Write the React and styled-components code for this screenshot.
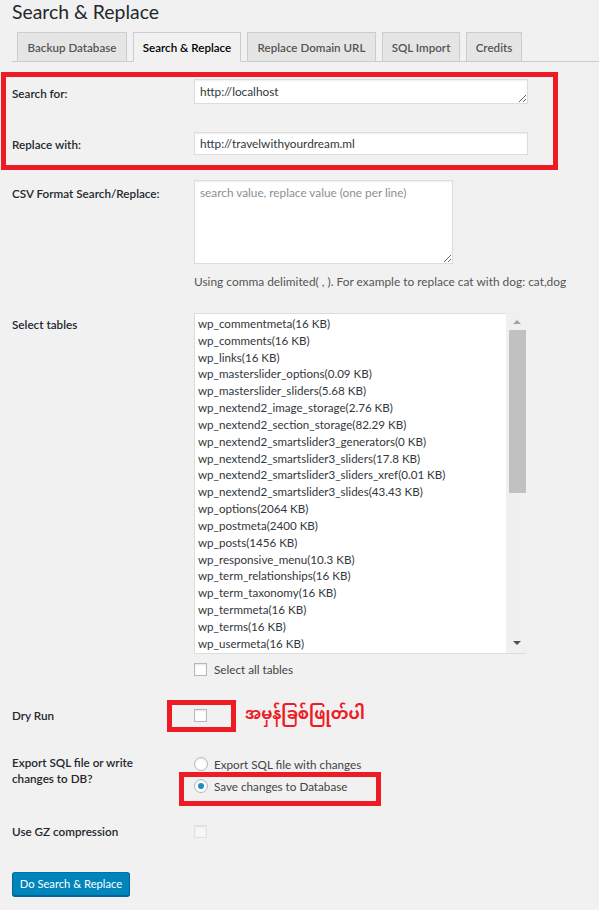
import React from "react";
import styled, { createGlobalStyle } from "styled-components";

const FONT = `"Lato", "Open Sans", "Noto Sans", sans-serif`;

const Global = createGlobalStyle`
  html, body { margin: 0; padding: 0; background: #f1f1f1; }
  body { font-family: ${FONT}; font-size: 11.7px; color: #444; }
  * { box-sizing: border-box; }
`;

const Page = styled.div`
  width: 599px;
  min-height: 910px;
  overflow: hidden;
  padding: 0 0 0 12px;
`;

const Title = styled.h1`
  margin: -1px 0 0;
  font-size: 19.4px;
  line-height: 26px;
  font-weight: 400;
  color: #23282d;
`;

const TabBar = styled.nav`
  display: flex;
  gap: 6px;
  margin-top: 7px;
  padding-left: 5px;
  border-bottom: 1px solid #ccc;
  height: 30px;
`;

const Tab = styled.a`
  display: block;
  flex: none;
  width: ${(p) => p.$w}px;
  height: 30px;
  padding: 5px 0 4px;
  text-align: center;
  line-height: 19px;
  font-size: 11.6px;
  font-weight: 600;
  color: ${(p) => (p.$active ? "#000" : "#555")};
  background: ${(p) => (p.$active ? "#f1f1f1" : "#e5e5e5")};
  border: 1px solid #ccc;
  border-bottom-color: ${(p) => (p.$active ? "#f1f1f1" : "#ccc")};
  white-space: nowrap;
  text-decoration: none;
`;

const Form = styled.form`
  display: flex;
  flex-direction: column;
`;

const Row = styled.div`
  display: grid;
  grid-template-columns: 182px auto;
  align-items: ${(p) => p.$align || "start"};
  margin-top: ${(p) => p.$mt}px;
`;

const Label = styled.div`
  padding-top: ${(p) => p.$pt || 0}px;
  line-height: ${(p) => p.$lh || 18}px;
  font-weight: 600;
  color: #23282d;
`;

const Field = styled.div`
  position: relative;
  display: flex;
  flex-direction: column;
  align-items: flex-start;
`;

const HighlightGroup = styled.div`
  position: relative;
`;

const RedFrame = styled.div`
  position: absolute;
  left: ${(p) => p.$l}px;
  top: ${(p) => p.$t}px;
  width: ${(p) => p.$w}px;
  height: ${(p) => p.$h}px;
  border: 5px solid #ed1c24;
  pointer-events: none;
`;

const Note = styled.span`
  position: absolute;
  left: 51px;
  top: 50%;
  transform: translateY(-50%);
  white-space: nowrap;
  color: #ed1c24;
  font-weight: 700;
  font-size: 16px;
  font-family: "Noto Sans Myanmar", "Padauk", "Myanmar Text", "Noto Sans", sans-serif;
`;

const inputBase = `
  font-family: ${FONT};
  font-size: 11.8px;
  color: #32373c;
  background: #fff;
  border: 1px solid #ddd;
  box-shadow: inset 0 1px 2px rgba(0,0,0,.07);
  outline: none;
  margin: 0;
`;

const TextArea = styled.textarea`
  ${inputBase}
  display: block;
  width: ${(p) => p.$w}px;
  height: ${(p) => p.$h}px;
  padding: 2px 5px;
  line-height: 19px;
  &::placeholder { color: #8a8f94; }
`;

const TextInput = styled.input`
  ${inputBase}
  display: block;
  width: ${(p) => p.$w}px;
  height: ${(p) => p.$h}px;
  padding: 0 5px;
`;

const Help = styled.p`
  margin: 9px 0 0;
  font-size: 11.9px;
  line-height: 18px;
  color: #555;
  white-space: nowrap;
`;

const ListBox = styled.div`
  display: flex;
  width: 332px;
  height: 341px;
  border-bottom: 1px solid #ddd;
`;

const ListItems = styled.div`
  flex: 1;
  background: #fff;
  border: 1px solid #ddd;
  border-right: none;
  border-bottom: none;
  padding: 2px 0 0 3px;
  overflow: hidden;
`;

const ListItem = styled.div`
  height: 16.84px;
  line-height: 16.84px;
  font-size: 11.6px;
  color: #32373c;
  white-space: nowrap;
`;

const ScrollTrack = styled.div`
  width: 20px;
  background: #f0f0f0;
  display: flex;
  flex-direction: column;
  align-items: center;
  padding: 7px 0 0 2px;
`;

const Arrow = styled.div`
  width: 0;
  height: 0;
  border-left: 4px solid transparent;
  border-right: 4px solid transparent;
  ${(p) =>
    p.$down
      ? `border-top: 4px solid #505050; margin-top: auto; margin-bottom: 8px;`
      : `border-bottom: 4px solid #a3a3a3;`}
`;

const Thumb = styled.div`
  width: 17px;
  height: 163px;
  margin-top: 6px;
  background: #c1c1c1;
`;

const CheckLine = styled.label`
  display: flex;
  align-items: center;
  gap: 7px;
  margin-top: ${(p) => p.$mt || 0}px;
  height: ${(p) => p.$h || 14}px;
  color: #444;
`;

const Box = styled.span`
  display: inline-block;
  width: 13px;
  height: 13px;
  background: ${(p) => (p.$disabled ? "#f7f7f7" : "#fff")};
  border: 1px solid ${(p) => (p.$disabled ? "#e2e2e2" : "#b4b9be")};
  box-shadow: inset 0 1px 2px rgba(0,0,0,.1);
  flex: none;
`;

const Radio = styled.span`
  display: inline-flex;
  align-items: center;
  justify-content: center;
  width: 14px;
  height: 14px;
  border-radius: 50%;
  background: #fff;
  border: 1px solid #b4b9be;
  box-shadow: inset 0 1px 2px rgba(0,0,0,.1);
  flex: none;
  &::after {
    content: "";
    display: ${(p) => (p.$checked ? "block" : "none")};
    width: 6px;
    height: 6px;
    border-radius: 50%;
    background: #1e8cbe;
  }
`;

const RadioGroup = styled.div`
  display: flex;
  flex-direction: column;
`;

const RadioLine = styled.label`
  position: relative;
  display: flex;
  align-items: center;
  gap: 6px;
  height: 22px;
  color: #444;
`;

const Button = styled.button`
  margin-top: 32px;
  align-self: flex-start;
  width: 118px;
  height: 24px;
  padding: 0;
  font-family: ${FONT};
  font-size: 11.2px;
  line-height: 22px;
  color: #fff;
  background: #0085ba;
  border: 1px solid #0073aa;
  border-color: #0073aa #006799 #006799;
  border-radius: 3px;
  box-shadow: 0 1px 0 #006799;
  white-space: nowrap;
  cursor: pointer;
`;

const tables = [
  "wp_commentmeta(16 KB)",
  "wp_comments(16 KB)",
  "wp_links(16 KB)",
  "wp_masterslider_options(0.09 KB)",
  "wp_masterslider_sliders(5.68 KB)",
  "wp_nextend2_image_storage(2.76 KB)",
  "wp_nextend2_section_storage(82.29 KB)",
  "wp_nextend2_smartslider3_generators(0 KB)",
  "wp_nextend2_smartslider3_sliders(17.8 KB)",
  "wp_nextend2_smartslider3_sliders_xref(0.01 KB)",
  "wp_nextend2_smartslider3_slides(43.43 KB)",
  "wp_options(2064 KB)",
  "wp_postmeta(2400 KB)",
  "wp_posts(1456 KB)",
  "wp_responsive_menu(10.3 KB)",
  "wp_term_relationships(16 KB)",
  "wp_term_taxonomy(16 KB)",
  "wp_termmeta(16 KB)",
  "wp_terms(16 KB)",
  "wp_usermeta(16 KB)",
];

const tabs = [
  { label: "Backup Database", w: 110 },
  { label: "Search & Replace", w: 108, active: true },
  { label: "Replace Domain URL", w: 129 },
  { label: "SQL Import", w: 78 },
  { label: "Credits", w: 56 },
];

export default function App() {
  return (
    <Page>
      <Global />
      <Title>Search &amp; Replace</Title>
      <TabBar>
        {tabs.map((t) => (
          <Tab key={t.label} $w={t.w} $active={t.active}>
            {t.label}
          </Tab>
        ))}
      </TabBar>
      <Form onSubmit={(e) => e.preventDefault()}>
        <HighlightGroup>
          <RedFrame $l={-11} $t={10} $w={557} $h={98} />
          <Row $mt={17}>
            <Label $pt={5}>Search for:</Label>
            <Field>
              <TextArea $w={334} $h={25} defaultValue="http://localhost" />
            </Field>
          </Row>
          <Row $mt={28}>
            <Label $pt={3}>Replace with:</Label>
            <Field>
              <TextInput $w={334} $h={23} defaultValue="http://travelwithyourdream.ml" />
            </Field>
          </Row>
        </HighlightGroup>

        <Row $mt={25}>
          <Label $pt={4}>CSV Format Search/Replace:</Label>
          <Field>
            <TextArea $w={259} $h={84} placeholder="search value, replace value (one per line)" />
            <Help>Using comma delimited( , ). For example to replace cat with dog: cat,dog</Help>
          </Field>
        </Row>

        <Row $mt={22}>
          <Label $pt={2}>Select tables</Label>
          <Field>
            <ListBox>
              <ListItems>
                {tables.map((t) => (
                  <ListItem key={t}>{t}</ListItem>
                ))}
              </ListItems>
              <ScrollTrack>
                <Arrow />
                <Thumb />
                <Arrow $down />
              </ScrollTrack>
            </ListBox>
            <CheckLine $mt={8}>
              <Box />
              Select all tables
            </CheckLine>
          </Field>
        </Row>

        <Row $mt={30} $align="center">
          <Label>Dry Run</Label>
          <Field>
            <Box />
            <RedFrame $l={-27} $t={-9} $w={69} $h={32} />
            <Note>အမှန်ခြစ်ဖြုတ်ပါ</Note>
          </Field>
        </Row>

        <Row $mt={29}>
          <Label $pt={1} $lh={16}>
            Export SQL file or write
            <br />
            changes to DB?
          </Label>
          <RadioGroup>
            <RadioLine>
              <Radio />
              Export SQL file with changes
            </RadioLine>
            <RadioLine>
              <Radio $checked />
              Save changes to Database
              <RedFrame $l={-15} $t={-3} $w={202} $h={34} />
            </RadioLine>
          </RadioGroup>
        </Row>

        <Row $mt={25} $align="center">
          <Label>Use GZ compression</Label>
          <Field>
            <Box $disabled />
          </Field>
        </Row>

        <Button type="submit">Do Search &amp; Replace</Button>
      </Form>
    </Page>
  );
}
